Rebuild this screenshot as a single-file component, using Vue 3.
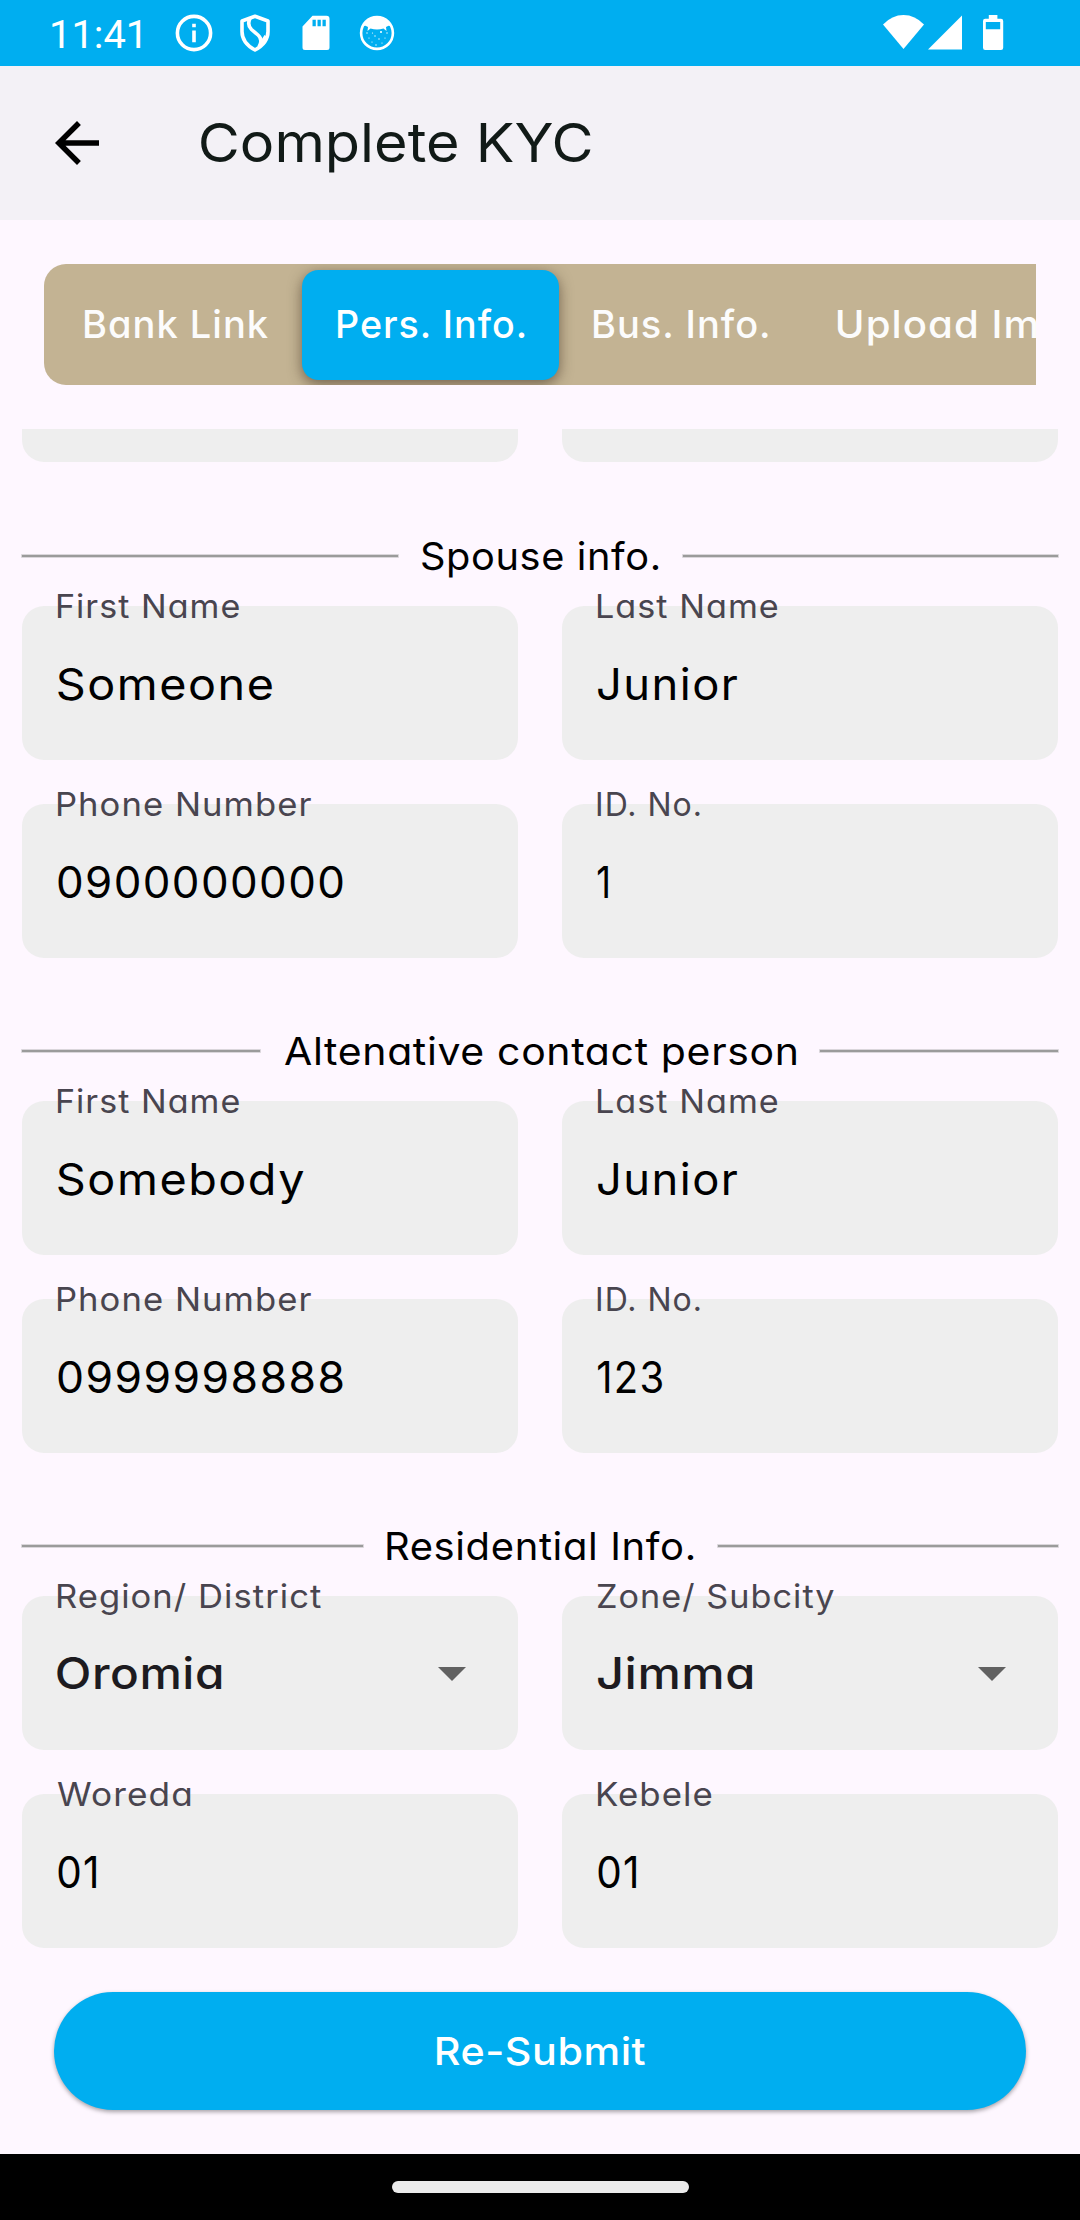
<script setup>
const tabs = [
  { text: 'Bank Link', w: 183.5 },
  { text: 'Pers. Info.', w: 186.5, active: true },
  { text: 'Bus. Info.', w: 174 },
  { text: 'Upload Image', w: 276 }
]

const sections = [
  {
    title: 'Spouse info.', w: 237,
    fields: [
      { label: 'First Name', lw: 182, value: 'Someone', vw: 214.5 },
      { label: 'Last Name', lw: 180.5, value: 'Junior', vw: 139.5 },
      { label: 'Phone Number', lw: 254, value: '0900000000', vw: 284.5 },
      { label: 'ID. No.', lw: 102.5, value: '1', vw: 10 }
    ]
  },
  {
    title: 'Altenative contact person', w: 512,
    fields: [
      { label: 'First Name', lw: 182, value: 'Somebody', vw: 246 },
      { label: 'Last Name', lw: 180.5, value: 'Junior', vw: 139.5 },
      { label: 'Phone Number', lw: 254, value: '0999998888', vw: 285 },
      { label: 'ID. No.', lw: 102.5, value: '123', vw: 64.5 }
    ]
  },
  {
    title: 'Residential Info.', w: 307,
    fields: [
      { label: 'Region/ District', lw: 264.5, value: 'Oromia', vw: 164.5, select: true },
      { label: 'Zone/ Subcity', lw: 237, value: 'Jimma', vw: 155.5, select: true },
      { label: 'Woreda', lw: 133, value: '01', vw: 38 },
      { label: 'Kebele', lw: 114.5, value: '01', vw: 38 }
    ]
  }
]

// Widens the letterforms to the given ink width and trims the side bearings.
const ctx = document.createElement('canvas').getContext('2d')
const vFit = {
  mounted(el, { value }) {
    const cs = getComputedStyle(el)
    ctx.font = `${cs.fontWeight} ${cs.fontSize} ${cs.fontFamily}`
    const m = ctx.measureText(el.textContent)
    const left = Math.max(0, -m.actualBoundingBoxLeft)
    const right = m.width - m.actualBoundingBoxRight
    const gap = parseFloat(cs.letterSpacing) || 0
    const ink = el.getBoundingClientRect().width - left - right - gap
    const scale = value / ink
    el.style.width = `${value}px`
    el.style.transform = `translateX(${-left * scale}px) scaleX(${scale})`
  }
}
</script>

<template>
  <div class="screen">
    <header class="status">
      <div class="status-left">
        <span class="time" v-fit="89">11:41</span>
        <svg class="i-info" width="38" height="38" viewBox="0 0 38 38">
          <circle cx="19" cy="19" r="16.6" fill="none" stroke="#fff" stroke-width="3.6" />
          <path d="M17.2 9.7h3.6v3.5h-3.6zM17.2 16.6h3.6v11.6h-3.6z" fill="#fff" />
        </svg>
        <svg class="i-shield" width="32" height="38" viewBox="0 0 32 38" fill="none" stroke="#fff" stroke-width="3.6" stroke-linejoin="round">
          <path d="M16 2.3 29 7v10.500c0 8-5.500 14.500-13 18.500C8.500 32 3 25.500 3 17.500V7z" />
          <path d="M11 4.500c-2 4-1.500 8 1.500 11l6.500 5.500c4 3.500 4 7 1 12" />
          <path d="M22 30l5-8" />
        </svg>
        <svg class="i-sd" width="28" height="36" viewBox="0 0 28 36">
          <path fill="#fff" fill-rule="evenodd" d="M10.500 0.700H24.500a3 3 0 0 1 3 3V32.500a2.500 2.500 0 0 1-2.500 2.500H3a2.500 2.500 0 0 1-2.500-2.500V11.500zM10.500 4.700v6.500h3.300V4.700zM15.500 4.700v6.500h3.300V4.700zM20.500 4.700v6.500h3.300V4.700z" />
        </svg>
        <svg class="i-cat" width="36" height="36" viewBox="0 0 36 36">
          <circle cx="18" cy="18" r="15.900" fill="none" stroke="#fff" stroke-width="2.600" />
          <path fill="#fff" d="M4 11C6.500 5 12 2 18 2s11.500 3 14 9l-2.500-.3-2.500 1.300 .500 4-3-2.500q-6.500 1.800-13 0l-3 2.500 .500-4-2.500-1.300z" />
          <g fill="#fff">
            <circle cx="8" cy="18" r=".7" /><circle cx="13.500" cy="18" r=".6" /><circle cx="22" cy="17" r="1" /><circle cx="28" cy="18" r=".7" />
            <circle cx="10" cy="23" r=".6" /><circle cx="16" cy="21" r=".7" /><circle cx="20" cy="24" r=".7" /><circle cx="26" cy="23" r=".6" />
            <circle cx="13" cy="27" r=".6" /><circle cx="23" cy="28" r=".6" /><circle cx="17" cy="30" r=".7" />
          </g>
        </svg>
      </div>
      <svg class="status-right" width="122" height="38" viewBox="0 0 122 38" fill="#fff">
        <path d="M0 10.500Q9 1 20.500 1T41 10.500L20.500 35z" />
        <path d="M79 1.500V35.500H45z" />
        <path fill-rule="evenodd" d="M105.800 1h8.600v3.700h3.600a2.200 2.200 0 0 1 2.200 2.200V33.800a2.200 2.200 0 0 1-2.200 2.200h-15.800a2.200 2.200 0 0 1-2.200-2.200V6.900a2.200 2.200 0 0 1 2.200-2.200h3.600zM102.800 8v7.300h14.400V8z" />
      </svg>
    </header>

    <div class="appbar">
      <svg width="66" height="66" viewBox="0 0 24 24"><path d="M20 11H7.830l5.590-5.590L12 4l-8 8 8 8 1.410-1.410L7.830 13H20v-2z" /></svg>
      <h1><span v-fit="390">Complete KYC</span></h1>
    </div>

    <nav class="tabs">
      <div v-for="t in tabs" :key="t.text" class="tab" :class="{ active: t.active }">
        <span v-fit="t.w">{{ t.text }}</span>
      </div>
    </nav>

    <main class="form">
      <div class="cut"><i></i><i></i></div>
      <section v-for="s in sections" :key="s.title">
        <h2><span v-fit="s.w">{{ s.title }}</span></h2>
        <div class="grid">
          <div v-for="f in s.fields" :key="f.label" class="field" :class="{ select: f.select }">
            <label><span v-fit="f.lw">{{ f.label }}</span></label>
            <div class="value"><span v-fit="f.vw">{{ f.value }}</span></div>
            <svg v-if="f.select" width="28" height="14" viewBox="0 0 28 14"><path d="M0 0h28L14 14z" fill="#616161" /></svg>
          </div>
        </div>
      </section>
    </main>

    <button class="submit"><span v-fit="208.5">Re-Submit</span></button>
    <footer><i></i></footer>
  </div>
</template>

<style>
body { margin: 0; background: #fef7ff; }
</style>

<style scoped>
.screen {
  width: 1080px;
  height: 2220px;
  display: flex;
  flex-direction: column;
  overflow: hidden;
  background: #fef7ff;
  font-family: Inter, sans-serif;
  font-feature-settings: "cv11";
  color: #000;
}
span { display: inline-block; white-space: nowrap; transform-origin: 0 50%; }
svg { display: block; flex: none; }
.status {
  height: 66px;
  box-sizing: border-box;
  padding: 0 75px 0 52px;
  display: flex;
  justify-content: space-between;
  align-items: center;
  background: #00aef0;
}
.status-left { display: flex; align-items: center; }
.time { font: 400 39.5px/46px Roboto, sans-serif; color: #fff; margin-top: 3px; }
.i-info { margin-left: 34px; }
.i-shield { margin-left: 26px; }
.i-sd { margin-left: 31px; }
.i-cat { margin-left: 29px; }
.appbar {
  height: 154px;
  display: flex;
  align-items: center;
  background: #f3f1f6;
}
.appbar svg { margin-left: 44px; }
h1 {
  margin: 0 0 0 91px;
  font-size: 54px;
  font-weight: 400;
  line-height: 64px;
  color: #111a17;
}
.tabs {
  margin: 44px 44px 0;
  height: 121px;
  box-sizing: border-box;
  padding: 5.500px 0 5.500px 5px;
  display: flex;
  overflow: hidden;
  background: #c3b393;
  border-radius: 22px 0 0 22px;
  color: #fcfcfc;
  font-size: 38.500px;
  font-weight: 500;
  letter-spacing: 1px;
}
.tab {
  flex: none;
  height: 110px;
  box-sizing: border-box;
  padding: 0 34.200px 2px 35.700px;
  display: flex;
  align-items: center;
  border-radius: 16.500px;
}
.active {
  background: #00aef0;
  color: #fff;
  box-shadow: 0 4px 14px rgba(60, 45, 30, .6);
}
.form { margin-top: 44px; padding: 0 22px; }
.cut {
  display: grid;
  grid-template-columns: 1fr 1fr;
  gap: 44px;
  height: 33px;
  margin-bottom: 74px;
}
.cut i { background: #eee; border-radius: 0 0 22px 22px; }
h2 {
  margin: 0 0 29.500px;
  height: 40px;
  display: flex;
  align-items: center;
  gap: 24px;
  font-size: 38.500px;
  font-weight: 400;
  line-height: 40px;
  letter-spacing: .6px;
}
h2::before, h2::after {
  content: "";
  flex: 1;
  height: 2px;
  background: #9b9b9b;
  box-shadow: 0 0 0 .8px rgba(155, 155, 155, .45);
}
section { margin-bottom: 73.500px; }
section:last-child { margin-bottom: 0; }
.grid { display: grid; grid-template-columns: 1fr 1fr; gap: 44px; }
.field {
  position: relative;
  height: 154px;
  box-sizing: border-box;
  padding: 53.500px 52px 0 36px;
  display: flex;
  align-items: flex-start;
  justify-content: space-between;
  background: #eee;
  border-radius: 22px;
}
label {
  position: absolute;
  left: 35px;
  top: -20px;
  font-size: 33px;
  line-height: 40px;
  letter-spacing: 1px;
  color: #49454f;
}
.value { font-size: 43.500px; line-height: 50px; letter-spacing: 1.400px; }
.field svg { margin-top: 18px; }
.select .value { font-weight: 500; color: #1d1b20; margin-top: -1px; margin-left: -1px; letter-spacing: .5px; }
.submit {
  flex: none;
  margin: 44px 54px 0;
  height: 118.500px;
  padding: 0 0 0 2px;
  border: 0;
  border-radius: 60px;
  background: #00aef0;
  box-shadow: 0 2px 4px rgba(0, 0, 0, .35);
  color: #fff;
  font: 500 38.500px/46px Inter, sans-serif;
  letter-spacing: .5px;
}
.submit span { text-align: left; }
footer {
  margin-top: auto;
  height: 66px;
  display: flex;
  align-items: center;
  justify-content: center;
  background: #000;
}
footer i { width: 297px; height: 12px; border-radius: 6px; background: #ebebeb; }
</style>
